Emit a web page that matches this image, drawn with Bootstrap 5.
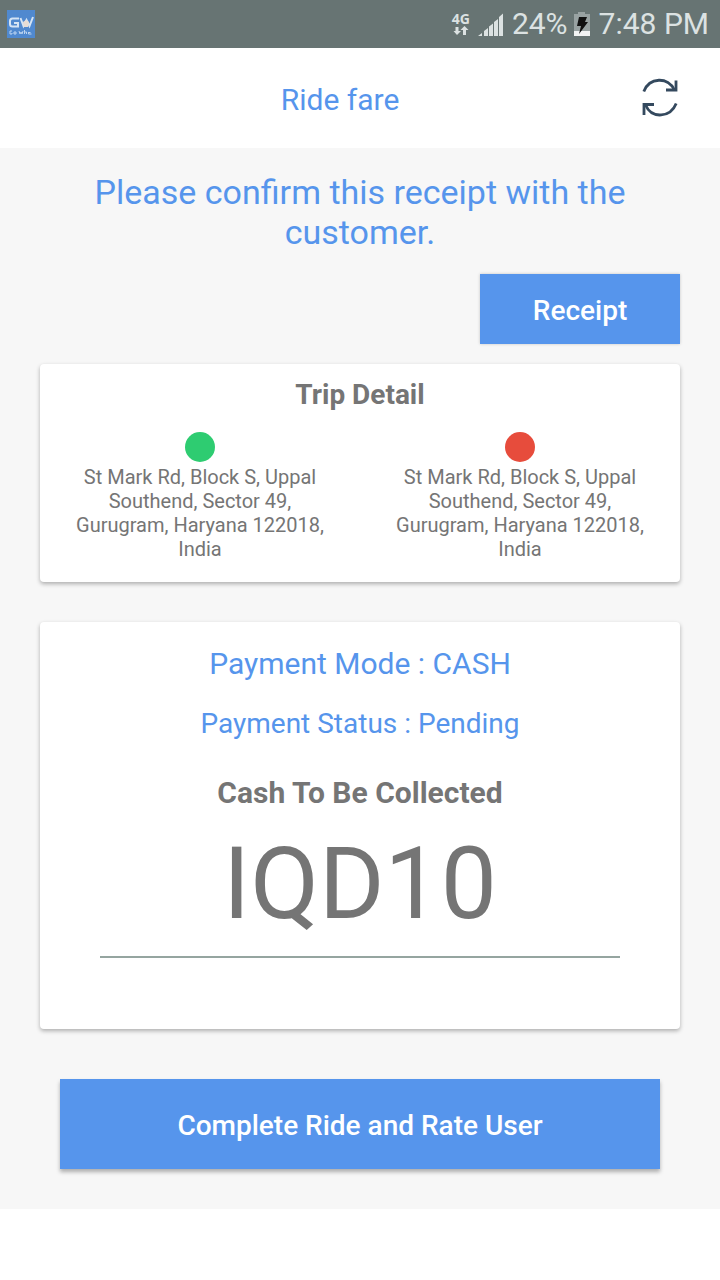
<!DOCTYPE html>
<html lang="en">
<head>
<meta charset="utf-8">
<meta name="viewport" content="width=device-width, initial-scale=1">
<title>Ride fare</title>
<link href="https://cdn.jsdelivr.net/npm/bootstrap@5.3.0/dist/css/bootstrap.min.css" rel="stylesheet">
<style>
  body { font-family: Roboto, "Noto Sans", sans-serif; color: #757575; background: #fff; }
  .status-bar { height: 48px; padding: 0 11px 0 7px; background: #677473; color: #dce2e2; font-size: 30px; line-height: 48px; }
  .status-icons { gap: 8px; }
  .battery-group { gap: 5px; }
  .net-type { font-family: "Open Sans", sans-serif; font-size: 14px; line-height: 14px; font-weight: 700; }
  .app-header { height: 100px; padding: 0 40px; }
  .title-text { font-size: 30px; line-height: 36px; }
  .blue-text { color: #5695ec; }
  .refresh { width: 40px; height: 40px; }
  .page-body { background: #f7f7f7; padding: 24px 40px 40px; }
  .lead-text { font-size: 34px; line-height: 40px; padding: 0 40px; margin-bottom: 22px; }
  .btn-ride { --bs-btn-color: #fff; --bs-btn-bg: #5695ec; --bs-btn-hover-color: #fff; --bs-btn-hover-bg: #4687e0; --bs-btn-active-color: #fff; --bs-btn-active-bg: #3f7fd6; font-size: 28px; line-height: 34px; font-weight: 500; padding: 3px 0 0; }
  .btn-receipt { width: 200px; height: 70px; margin-bottom: 20px; box-shadow: 0 0 3px rgba(0,0,0,.2); }
  .btn-complete { height: 90px; box-shadow: 0 3px 4px rgba(0,0,0,.3); }
  .panel { --bs-card-border-radius: 4px; --bs-card-color: #757575; box-shadow: 0 2px 4px rgba(0,0,0,.3); }
  .trip { padding: 14px 0 21px; margin-bottom: 40px; }
  .trip-title { font-size: 28px; line-height: 34px; margin-bottom: 20px; }
  .stop-dot { width: 30px; height: 30px; margin-bottom: 3px; }
  .from-dot { background: #2ecc71; }
  .to-dot { background: #e74c3c; }
  .address { font-size: 20px; line-height: 24px; padding: 0 30px; }
  .payment { padding: 24px 60px 71px; margin-bottom: 50px; }
  .pay-status { font-size: 28px; line-height: 36px; }
  .cash-title { font-size: 30px; line-height: 38px; }
  .amount { font-size: 100px; line-height: 120px; padding: 12px 0; border-bottom: 2px solid #95a5a0; }
</style>
</head>
<body>
<div class="status-bar d-flex align-items-center justify-content-between">
  <svg width="28" height="28" viewBox="0 0 28 28" role="img" aria-label="GW">
    <rect width="28" height="28" fill="#5089cf"/>
    <g fill="none" stroke="#d5e4f4" stroke-width="2">
      <path d="M12 8.500H5.500Q3 8.500 3 11v3q0 2.500 2.500 2.500H11V13H7"/>
      <path d="M13.500 8l3 8 3-6 3 6 3.500-9"/>
    </g>
    <path d="M16 12l3-2 3 2-1 5h-4z" fill="#e6dcd4"/>
    <path d="M3 21h2M3 21v3h2v-1M7 22h2v2H7zM12 21l1 3 1-2 1 2 1-3M17.500 20v4m0-2h2v2M21.500 22.500h2M21.500 22v2h3" fill="none" stroke="#bcd4f0" stroke-width="1"/>
  </svg>
  <div class="status-icons d-flex align-items-center">
    <div class="d-flex flex-column align-items-center">
      <span class="net-type">4G</span>
      <svg width="16" height="10" viewBox="0 0 16 10" fill="#dce2e2" aria-hidden="true">
        <path d="M2.500 1h3v4H8L4 9 0.500 5h2zM10 9h3V4h2.500l-4-4L7.500 4H10z"/>
      </svg>
    </div>
    <svg width="26" height="26" viewBox="0 0 26 26" fill="#dce2e2" role="img" aria-label="Signal">
      <path d="M0 25L4 22V25zM6 20l4-3v8H6zM11 15.500L15 12.500V25h-4zM16 11L20 8V25h-4zM21 6L25 2.500V25h-4z"/>
    </svg>
    <div class="battery-group d-flex align-items-center">
      <span>24%</span>
      <svg width="18" height="26" viewBox="0 0 18 26" role="img" aria-label="Charging">
        <path d="M5 1h7v2h5v17H1V3h4z" fill="#98a2a2"/>
        <path d="M1 20h16v5H1z" fill="#f2f4f4"/>
        <path d="M6 6h8l-2 5h3L6 23l2-8H4z" fill="#111"/>
      </svg>
    </div>
    <span>7:48 PM</span>
  </div>
</div>

<header class="app-header d-flex align-items-center bg-white">
  <h1 class="title-text blue-text fw-normal flex-grow-1 text-center mb-0 pt-1">Ride fare</h1>
  <button type="button" class="refresh btn border-0 p-0 d-flex" aria-label="Refresh">
    <svg width="40" height="40" viewBox="0 0 40 40" fill="none" stroke="#34495e" stroke-width="2.800">
      <path d="M3.800 13.500C9.500 -1 28 -1.500 34.500 12"/>
      <path d="M26 12H36V2.500"/>
      <path d="M36.200 25.500C30.500 39.500 12 41.500 5.500 27"/>
      <path d="M14 26.500H4V37"/>
    </svg>
  </button>
</header>

<main class="page-body">
  <p class="lead-text blue-text text-center">Please confirm this receipt with the customer.</p>
  <div class="d-flex justify-content-end">
    <button type="button" class="btn btn-ride btn-receipt border-0 rounded-0">Receipt</button>
  </div>

  <section class="card panel trip border-0 text-center">
    <h2 class="trip-title fw-bold">Trip Detail</h2>
    <div class="row g-0">
      <div class="col-6 d-flex flex-column align-items-center">
        <span class="stop-dot from-dot rounded-circle"></span>
        <p class="address mb-0">St Mark Rd, Block S, Uppal Southend, Sector 49, Gurugram, Haryana 122018, India</p>
      </div>
      <div class="col-6 d-flex flex-column align-items-center">
        <span class="stop-dot to-dot rounded-circle"></span>
        <p class="address mb-0">St Mark Rd, Block S, Uppal Southend, Sector 49, Gurugram, Haryana 122018, India</p>
      </div>
    </div>
  </section>

  <section class="card panel payment border-0 text-center">
    <p class="title-text blue-text mb-4">Payment Mode : CASH</p>
    <p class="pay-status blue-text mb-4">Payment Status : Pending</p>
    <h2 class="cash-title fw-bold mt-2 mb-0">Cash To Be Collected</h2>
    <div class="amount">IQD10</div>
  </section>

  <div class="px-3 mx-1">
    <button type="button" class="btn btn-ride btn-complete w-100 border-0 rounded-0">Complete Ride and Rate User</button>
  </div>
</main>
<script src="https://cdn.jsdelivr.net/npm/bootstrap@5.3.0/dist/js/bootstrap.bundle.min.js"></script>
</body>
</html>
